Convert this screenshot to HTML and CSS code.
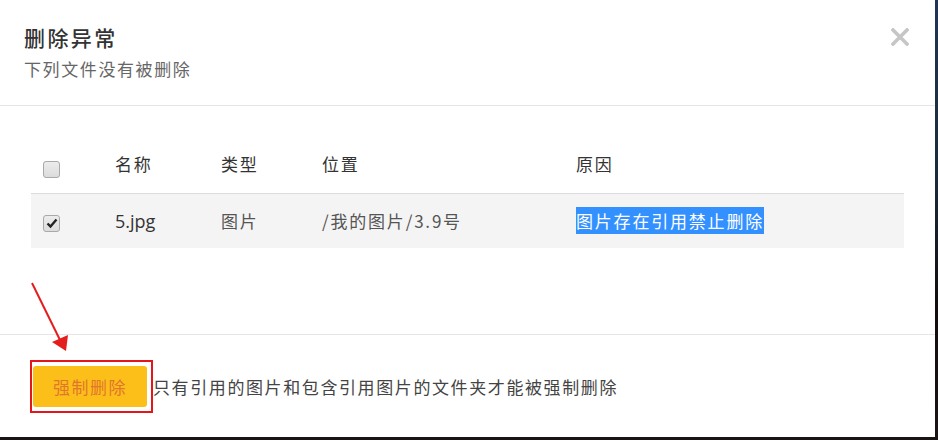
FILE: index.html
```html
<!DOCTYPE html>
<html lang="zh-CN">
<head>
<meta charset="utf-8">
<title>删除异常</title>
<link rel="stylesheet" href="styles.css">
</head>
<body>
<div class="modal">
  <div class="modal-header">
    <div class="titles">
      <h2 class="title">删除异常</h2>
      <p class="subtitle">下列文件没有被删除</p>
    </div>
    <button class="close" aria-label="关闭">
      <svg width="18" height="18" viewBox="0 0 18 18"><path d="M2 2 L16 16 M16 2 L2 16" stroke="#c6c6c6" stroke-width="3.6" stroke-linecap="square" fill="none"/></svg>
    </button>
  </div>
  <div class="modal-body">
    <table class="files">
      <colgroup>
        <col class="c-check"><col class="c-name"><col class="c-type"><col class="c-pos"><col class="c-reason">
      </colgroup>
      <thead>
        <tr>
          <th><span class="cb"></span></th>
          <th>名称</th>
          <th>类型</th>
          <th>位置</th>
          <th>原因</th>
        </tr>
      </thead>
      <tbody>
        <tr>
          <td><span class="cb checked"><svg width="12" height="12" viewBox="0 0 12 12"><path d="M1.5 6.5 L4.5 9.5 L10.5 2.5" stroke="#222" stroke-width="2.4" fill="none"/></svg></span></td>
          <td class="name">5.jpg</td>
          <td>图片</td>
          <td>/我的图片/3.9号</td>
          <td><span class="sel">图片存在引用禁止删除</span></td>
        </tr>
      </tbody>
    </table>
  </div>
  <div class="modal-footer">
    <span class="mark"><button class="btn-force">强制删除</button></span><span class="note">只有引用的图片和包含引用图片的文件夹才能被强制删除</span>
  </div>
  <svg class="arrow" width="80" height="80" viewBox="0 0 80 80">
    <line x1="32" y1="3" x2="60" y2="60" stroke="#e41e1e" stroke-width="2"/>
    <polygon points="66,71 52,62 68,55" fill="#e41e1e"/>
  </svg>
</div>
</body>
</html>
```
FILE: styles.css
```css
html, body {
  margin: 0;
  padding: 0;
}
body {
  width: 938px;
  height: 440px;
  background: linear-gradient(#1e3652 0, #1a2a3c 40%, #120c0c 70%, #1a1414 100%);
  font-family: "Noto Sans CJK SC", "Noto Sans", sans-serif;
  overflow: hidden;
}
.modal {
  position: relative;
  width: 935px;
  height: 437px;
  background: #fff;
  box-sizing: border-box;
}
.modal-header {
  height: 106px;
  box-sizing: border-box;
  border-bottom: 1px solid #e5e5e5;
  padding: 22px 26px 0 24px;
  display: flex;
  justify-content: space-between;
  align-items: flex-start;
}
.title {
  margin: 0;
  font-size: 21px;
  font-weight: 500;
  letter-spacing: 2.4px;
  color: #333;
  line-height: 30px;
}
.subtitle {
  margin: 4px 0 0;
  font-size: 17px;
  letter-spacing: 1.6px;
  color: #666;
  line-height: 26px;
}
.close {
  margin-top: 6px;
  border: 0;
  background: none;
  padding: 0;
  width: 18px;
  height: 18px;
}
.close svg { display: block; }
.modal-body {
  height: 229px;
  box-sizing: border-box;
  padding: 39px 31px 0 31px;
  border-bottom: 1px solid #e5e5e5;
}
.files {
  width: 873px;
  border-collapse: collapse;
  table-layout: fixed;
  font-size: 17px;
  letter-spacing: 1.8px;
}
.c-check { width: 84px; }
.c-name { width: 106px; }
.c-type { width: 101px; }
.c-pos { width: 254px; }
.c-reason { width: 328px; }
.files th {
  text-align: left;
  font-weight: 400;
  color: #333;
  height: 48px;
  padding: 0 0 10px;
  box-sizing: border-box;
  border-bottom: 1px solid #dcdcdc;
}
.files td {
  height: 54px;
  padding: 0;
  color: #555;
  background: #f4f4f4;
}
.files th:first-child, .files td:first-child {
  padding-left: 12px;
}
.files th:first-child {
  padding-bottom: 5px;
}
.files td.name {
  font-family: "Open Sans", sans-serif;
  font-weight: 500;
  font-size: 18px;
  color: #333;
  letter-spacing: 0;
}
.cb {
  display: inline-flex;
  align-items: center;
  justify-content: center;
  width: 15px;
  height: 15px;
  border: 1px solid #a9a9a9;
  border-radius: 3px;
  background: linear-gradient(#ececec, #dcdcdc);
  vertical-align: middle;
}
.sel {
  background: #3390ff;
  color: #fff;
  padding: 1px 0;
}
.modal-footer {
  padding: 25px 0 0 30px;
  display: flex;
  align-items: center;
}
.mark {
  display: inline-block;
  border: 2px solid #e3161c;
  padding: 4px 4px 4px 1px;
}
.btn-force {
  display: block;
  width: 114px;
  height: 41px;
  border: 0;
  border-radius: 3px;
  background: #fcbf1a;
  color: #e2762a;
  font-family: "Noto Sans CJK SC", sans-serif;
  font-size: 17px;
  letter-spacing: 1.5px;
  padding: 0;
}
.note {
  font-size: 17px;
  letter-spacing: 1.6px;
  color: #444;
}
.arrow {
  position: absolute;
  left: 0;
  top: 280px;
}
```
